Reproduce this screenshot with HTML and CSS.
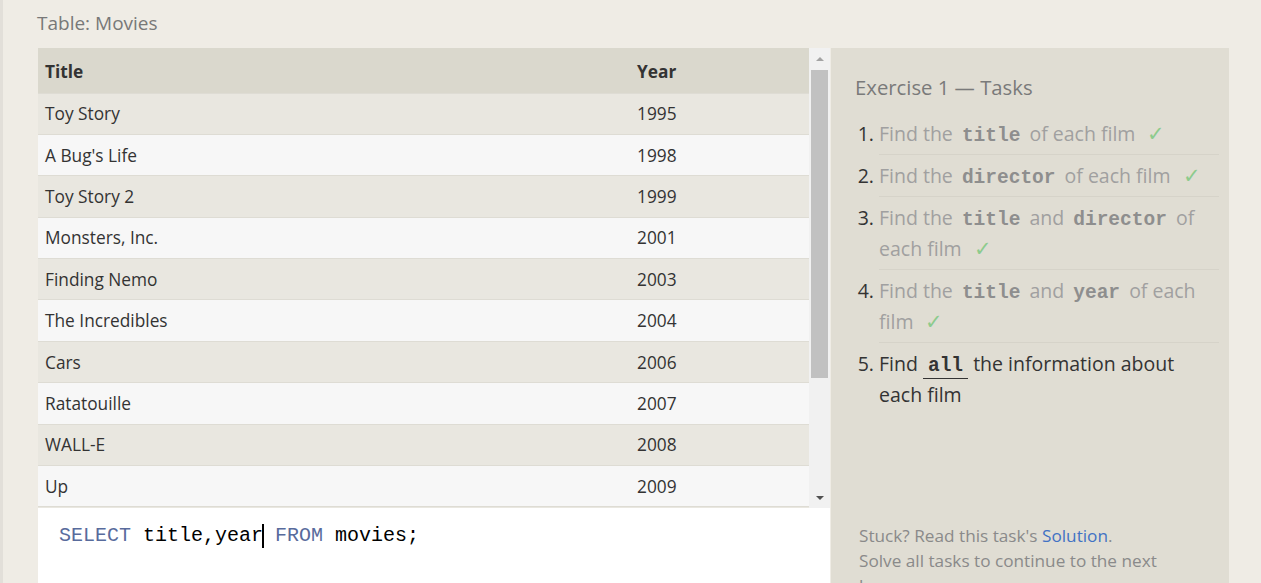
FILE: index.html
```html
<!DOCTYPE html>
<html lang="en">
<head>
<meta charset="utf-8">
<title>SQL Lesson — Movies</title>
<link rel="stylesheet" href="styles.css">
</head>
<body>
<div class="workspace">
  <div class="table-label">Table: Movies</div>
  <div class="layout">
    <div class="left">
      <div class="results">
        <div class="table-scroll">
          <table class="movies">
            <colgroup><col class="col-title"><col class="col-year"></colgroup>
            <thead>
              <tr><th>Title</th><th>Year</th></tr>
            </thead>
            <tbody>
              <tr><td>Toy Story</td><td>1995</td></tr>
              <tr><td>A Bug's Life</td><td>1998</td></tr>
              <tr><td>Toy Story 2</td><td>1999</td></tr>
              <tr><td>Monsters, Inc.</td><td>2001</td></tr>
              <tr><td>Finding Nemo</td><td>2003</td></tr>
              <tr><td>The Incredibles</td><td>2004</td></tr>
              <tr><td>Cars</td><td>2006</td></tr>
              <tr><td>Ratatouille</td><td>2007</td></tr>
              <tr><td>WALL-E</td><td>2008</td></tr>
              <tr><td>Up</td><td>2009</td></tr>
              <tr><td>Toy Story 3</td><td>2010</td></tr>
              <tr><td>Cars 2</td><td>2011</td></tr>
              <tr><td>Brave</td><td>2012</td></tr>
              <tr><td>Monsters University</td><td>2013</td></tr>
            </tbody>
          </table>
        </div>
        <div class="scrollbar" aria-hidden="true">
          <div class="sb-button"><span class="arrow arrow-up"></span></div>
          <div class="sb-track"><div class="sb-thumb"></div></div>
          <div class="sb-button"><span class="arrow arrow-down"></span></div>
        </div>
      </div>
      <div class="editor">
        <code class="query"><span class="kw">SELECT</span> title,year<span class="cursor"></span> <span class="kw">FROM</span> movies;</code>
      </div>
    </div>
    <aside class="tasks">
      <h2 class="tasks-title">Exercise 1 — Tasks</h2>
      <ol class="task-list">
        <li class="task"><span class="done">Find the <code>title</code> of each film<span class="check">✓</span></span></li>
        <li class="task"><span class="done">Find the <code>director</code> of each film<span class="check">✓</span></span></li>
        <li class="task"><span class="done">Find the <code>title</code> and <code>director</code> of each film<span class="check">✓</span></span></li>
        <li class="task"><span class="done">Find the <code>title</code> and <code>year</code> of each film<span class="check">✓</span></span></li>
        <li class="task current">Find <code>all</code> the information about each film</li>
      </ol>
      <div class="help">
        <p>Stuck? Read this task's <a href="#">Solution</a>.</p>
        <p>Solve all tasks to continue to the next lesson.</p>
      </div>
    </aside>
  </div>
</div>
</body>
</html>
```
FILE: styles.css
```css
html, body {
  margin: 0;
  padding: 0;
}

body {
  background: #efece5;
  border-left: 3px solid #e2dfd9;
  font-family: "Open Sans", "Noto Sans", sans-serif;
  color: #333;
}

.workspace {
  padding: 0 32px 0 35px;
}

.table-label {
  height: 48px;
  line-height: 46px;
  font-size: 19px;
  color: #787878;
  margin-left: -1px;
}

.layout {
  display: flex;
  gap: 1px;
  align-items: stretch;
}

.left {
  width: 792px;
  flex: none;
}

.results {
  display: flex;
  height: 460px;
}

.table-scroll {
  flex: 1;
  overflow: hidden;
}

.movies {
  width: 100%;
  table-layout: fixed;
  border-collapse: collapse;
  font-size: 17.3px;
  color: #333;
}

.movies .col-title {
  width: 592px;
}

.movies th {
  background: #dad8cd;
  height: 45px;
  padding: 3px 7px 0;
  text-align: left;
  font-weight: 700;
  box-sizing: border-box;
}

.movies td {
  height: 41.4px;
  padding: 0 7px;
  border-top: 1px solid #dedcd4;
  box-sizing: border-box;
}

.movies tbody tr:nth-child(odd) {
  background: #e9e7e0;
}

.movies tbody tr:nth-child(even) {
  background: #f7f7f7;
}

.scrollbar {
  width: 21px;
  flex: none;
  background: #f1f1f1;
  display: flex;
  flex-direction: column;
}

.sb-button {
  height: 21px;
  display: flex;
  align-items: center;
  justify-content: center;
}

.arrow {
  width: 0;
  height: 0;
  border-left: 4px solid transparent;
  border-right: 4px solid transparent;
}

.arrow-up {
  border-bottom: 4px solid #a3a3a3;
}

.arrow-down {
  border-top: 4px solid #505050;
}

.sb-track {
  flex: 1;
  padding: 1px 2px;
}

.sb-thumb {
  height: 308px;
  background: #c1c1c1;
}

.editor {
  background: #fff;
  height: 160px;
  padding: 16px 21px;
  box-sizing: border-box;
}

.query {
  font-family: "Liberation Mono", "DejaVu Sans Mono", monospace;
  font-size: 20px;
  line-height: 24px;
  color: #000;
  white-space: pre;
}

.kw {
  color: #586b9c;
}

.cursor {
  display: inline-block;
  width: 0;
  height: 24px;
  border-left: 2px solid #000;
  margin: 0 -1px;
  vertical-align: top;
}

.tasks {
  width: 398px;
  flex: none;
  background: #e0ddd3;
  padding: 26px 10px 40px 24px;
  box-sizing: border-box;
}

.tasks-title {
  margin: 0;
  font-size: 20.3px;
  line-height: 26px;
  font-weight: 400;
  color: #7a7a7a;
}

.task-list {
  margin: 12px 0 0;
  padding-left: 24px;
  font-size: 19.5px;
  line-height: 31px;
}

.task {
  padding: 5px 0 5px;
  border-bottom: 1px solid #d6d3c9;
  color: #333;
}

.task:first-child {
  padding-top: 6px;
}

.task:last-child {
  border-bottom: none;
}

.task code {
  font-family: "Liberation Mono", "DejaVu Sans Mono", monospace;
  font-weight: 700;
  font-size: 19.5px;
  line-height: 1;
  padding: 0 4px;
}

.done {
  color: #a0a0a0;
}

.done code {
  color: #8e8e8e;
}

.check {
  color: #8dcb8d;
  margin-left: 12px;
  font-size: 21px;
  line-height: 1;
}

.current code {
  color: #333;
  padding: 0 5px 1px;
  border-bottom: 1px solid #333;
}

.help {
  margin-top: 108px;
  padding: 0 24px 0 4px;
  font-size: 17.2px;
  line-height: 25px;
  color: #8a8a8a;
}

.help p {
  margin: 0;
}

.help a {
  color: #4272c4;
  text-decoration: none;
}
```
